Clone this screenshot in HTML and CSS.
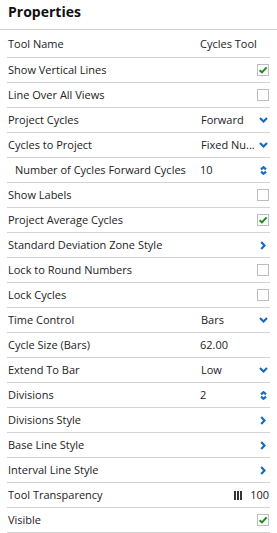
FILE: index.html
```html
<html>
<head>
<meta http-equiv="Content-Type" content="text/html; charset=utf-8">
<title>Properties</title>
<link rel="stylesheet" href="styles.css">
</head>

<body>
<div id="props">
	<div class="props-title">Properties</div>
	<ul class="props-list">
		<li class="row row-first"><span class="label">Tool Name</span><span class="value">Cycles Tool</span></li>
		<li class="row"><span class="label">Show Vertical Lines</span><span class="value"></span><span class="icon"><span class="check on"><svg width="10" height="10" viewBox="0 0 10 10"><path d="M1.6 5.2 L4 7.4 L8.6 2.4" /></svg></span></span></li>
		<li class="row"><span class="label">Line Over All Views</span><span class="value"></span><span class="icon"><span class="check"></span></span></li>
		<li class="row"><span class="label">Project Cycles</span><span class="value pick">Forward</span><span class="icon"><svg class="down" width="9" height="6" viewBox="0 0 9 6"><path d="M1 1 L4.5 4.5 L8 1" /></svg></span></li>
		<li class="row"><span class="label">Cycles to Project</span><span class="value pick" title="Fixed Number of Cycles">Fixed Nu...</span><span class="icon"><svg class="down" width="9" height="6" viewBox="0 0 9 6"><path d="M1 1 L4.5 4.5 L8 1" /></svg></span></li>
		<li class="row"><span class="label sub">Number of Cycles Forward Cycles</span><span class="value">10</span><span class="icon"><svg class="spin" width="7" height="9" viewBox="0 0 7 9"><path d="M1 3.4 L3.5 1.2 L6 3.4 M1 5.6 L3.5 7.8 L6 5.6" /></svg></span></li>
		<li class="row"><span class="label">Show Labels</span><span class="value"></span><span class="icon"><span class="check"></span></span></li>
		<li class="row"><span class="label">Project Average Cycles</span><span class="value"></span><span class="icon"><span class="check on"><svg width="10" height="10" viewBox="0 0 10 10"><path d="M1.6 5.2 L4 7.4 L8.6 2.4" /></svg></span></span></li>
		<li class="row"><span class="label">Standard Deviation Zone Style</span><span class="value"></span><span class="icon"><svg class="next" width="6" height="9" viewBox="0 0 6 9"><path d="M1.2 1 L4.5 4.5 L1.2 8" /></svg></span></li>
		<li class="row"><span class="label">Lock to Round Numbers</span><span class="value"></span><span class="icon"><span class="check"></span></span></li>
		<li class="row"><span class="label">Lock Cycles</span><span class="value"></span><span class="icon"><span class="check"></span></span></li>
		<li class="row"><span class="label">Time Control</span><span class="value pick">Bars</span><span class="icon"><svg class="down" width="9" height="6" viewBox="0 0 9 6"><path d="M1 1 L4.5 4.5 L8 1" /></svg></span></li>
		<li class="row"><span class="label">Cycle Size (Bars)</span><span class="value">62.00</span></li>
		<li class="row"><span class="label">Extend To Bar</span><span class="value pick">Low</span><span class="icon"><svg class="down" width="9" height="6" viewBox="0 0 9 6"><path d="M1 1 L4.5 4.5 L8 1" /></svg></span></li>
		<li class="row"><span class="label">Divisions</span><span class="value">2</span><span class="icon"><svg class="spin" width="7" height="9" viewBox="0 0 7 9"><path d="M1 3.4 L3.5 1.2 L6 3.4 M1 5.6 L3.5 7.8 L6 5.6" /></svg></span></li>
		<li class="row"><span class="label">Divisions Style</span><span class="value"></span><span class="icon"><svg class="next" width="6" height="9" viewBox="0 0 6 9"><path d="M1.2 1 L4.5 4.5 L1.2 8" /></svg></span></li>
		<li class="row"><span class="label">Base Line Style</span><span class="value"></span><span class="icon"><svg class="next" width="6" height="9" viewBox="0 0 6 9"><path d="M1.2 1 L4.5 4.5 L1.2 8" /></svg></span></li>
		<li class="row"><span class="label">Interval Line Style</span><span class="value"></span><span class="icon"><svg class="next" width="6" height="9" viewBox="0 0 6 9"><path d="M1.2 1 L4.5 4.5 L1.2 8" /></svg></span></li>
		<li class="row"><span class="label">Tool Transparency</span><span class="value slide"><span class="bars"><i></i><i></i><i></i></span>100</span></li>
		<li class="row"><span class="label">Visible</span><span class="value"></span><span class="icon"><span class="check on"><svg width="10" height="10" viewBox="0 0 10 10"><path d="M1.6 5.2 L4 7.4 L8.6 2.4" /></svg></span></span></li>
	</ul>
</div>
</body>
</html>
```

FILE: styles.css
```css
body{
	margin:0;
	background:#fff;
	font-family:"Open Sans","Liberation Sans",sans-serif;
	color:#222;
}
#props{
	width:277px;
}
.props-title{
	height:23px;
	line-height:23px;
	padding:0 0 6px 8px;
	border-bottom:1px solid #d2d2d2;
	font-size:14px;
	font-weight:bold;
	color:#111;
}
.props-list{
	list-style:none;
	margin:0 7px;
	padding:0;
}
.row{
	display:flex;
	align-items:center;
	height:24px;
	line-height:24px;
	padding:0 1px 0 1px;
	border-bottom:1px solid #d2d2d2;
	font-size:11px;
}
.row-first{
	height:27px;
	line-height:27px;
}
.label{
	width:192px;
	flex:none;
	white-space:nowrap;
}
.label.sub{
	padding-left:7px;
	width:185px;
}
.value{
	flex:1;
	min-width:0;
	white-space:nowrap;
}
.value.pick{
	padding-left:1px;
}
.value.slide{
	display:flex;
	align-items:center;
	justify-content:flex-end;
}
.bars{
	display:flex;
	gap:1px;
	margin-right:8px;
}
.bars i{
	display:block;
	width:2px;
	height:9px;
	background:#333;
}
.icon{
	width:12px;
	flex:none;
	display:flex;
	align-items:center;
	justify-content:center;
}
.icon svg path{
	fill:none;
	stroke:#1a6cc0;
	stroke-width:2.2;
}
.check{
	display:block;
	box-sizing:border-box;
	width:12px;
	height:12px;
	border:1px solid #bdbdbd;
	background:#fff;
}
.check svg{
	display:block;
	margin:0;
}
.icon .check svg path{
	stroke:#1f8a1f;
	stroke-width:2;
}
```
